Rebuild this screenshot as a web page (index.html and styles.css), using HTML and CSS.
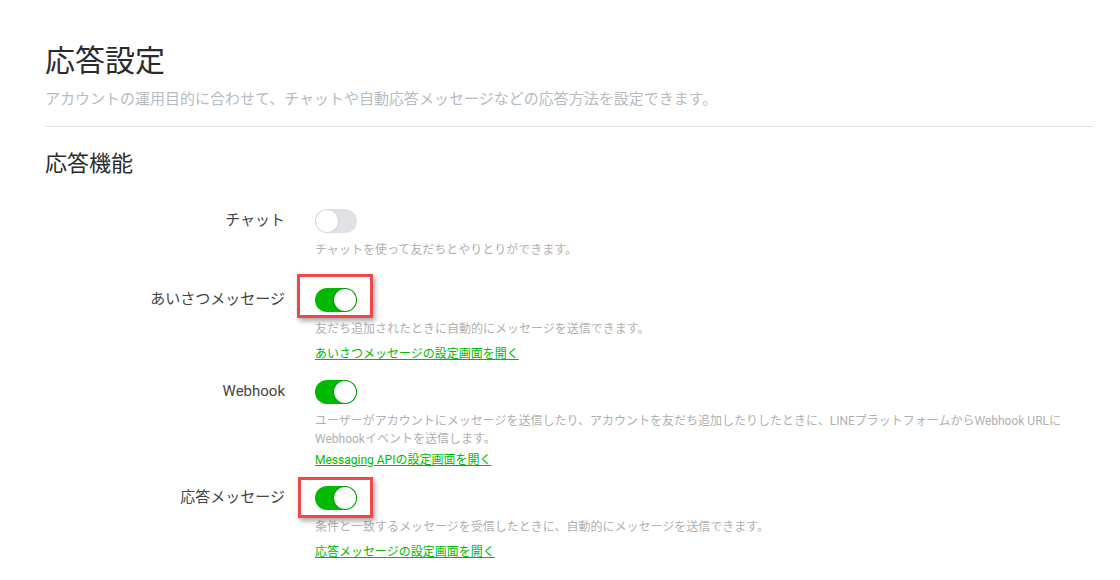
FILE: index.html
```html
<!DOCTYPE html>
<html lang="ja">
<head>
<meta charset="utf-8">
<title>応答設定</title>
<link rel="stylesheet" href="styles.css">
</head>
<body>
<main class="page">
  <h1 class="title">応答設定</h1>
  <p class="lead">アカウントの運用目的に合わせて、チャットや自動応答メッセージなどの応答方法を設定できます。</p>
  <hr class="divider">
  <h2 class="section-title">応答機能</h2>

  <div class="rows">
    <div class="row row-nolink">
      <div class="label">チャット</div>
      <div class="body">
        <span class="toggle"><span class="knob"></span></span>
        <p class="desc">チャットを使って友だちとやりとりができます。</p>
      </div>
    </div>

    <div class="row">
      <div class="label">あいさつメッセージ</div>
      <div class="body">
        <span class="toggle-wrap">
          <span class="toggle on"><span class="knob"></span></span>
          <span class="mark mark-a"></span>
        </span>
        <p class="desc">友だち追加されたときに自動的にメッセージを送信できます。</p>
        <a class="link" href="#">あいさつメッセージの設定画面を開く</a>
      </div>
    </div>

    <div class="row">
      <div class="label">Webhook</div>
      <div class="body">
        <span class="toggle on"><span class="knob"></span></span>
        <p class="desc desc-wide">ユーザーがアカウントにメッセージを送信したり、アカウントを友だち追加したりしたときに、LINEプラットフォームからWebhook URLにWebhookイベントを送信します。</p>
        <a class="link link-tight" href="#">Messaging APIの設定画面を開く</a>
      </div>
    </div>

    <div class="row">
      <div class="label">応答メッセージ</div>
      <div class="body">
        <span class="toggle-wrap">
          <span class="toggle on"><span class="knob"></span></span>
          <span class="mark mark-b"></span>
        </span>
        <p class="desc">条件と一致するメッセージを受信したときに、自動的にメッセージを送信できます。</p>
        <a class="link" href="#">応答メッセージの設定画面を開く</a>
      </div>
    </div>
  </div>
</main>
</body>
</html>
```

FILE: styles.css
```css
* { box-sizing: border-box; }

html, body {
  margin: 0;
  padding: 0;
  background: #ffffff;
}

body {
  font-family: Roboto, "Noto Sans CJK JP", sans-serif;
  color: #333333;
}

.page {
  padding: 41px 27px 0 45px;
}

.title {
  margin: 0;
  font-size: 30px;
  line-height: 40px;
  font-weight: 400;
  color: #2b2b2b;
}

.lead {
  margin: 7px 0 0;
  font-size: 15px;
  line-height: 22px;
  color: #b5bbc3;
}

.divider {
  margin: 16px 0 0;
  border: 0;
  border-top: 1px solid #e3e3e3;
  height: 0;
}

.section-title {
  margin: 21px 0 0;
  font-size: 22px;
  line-height: 32px;
  font-weight: 400;
  color: #2b2b2b;
}

.rows {
  margin-top: 29px;
  display: flex;
  flex-direction: column;
}

.row {
  display: grid;
  grid-template-columns: 240px 1fr;
  column-gap: 30px;
  padding-bottom: 17px;
}

.row-nolink {
  padding-bottom: 29px;
}

.label {
  text-align: right;
  font-size: 15px;
  line-height: 22px;
  color: #444444;
}

.body {
  display: flex;
  flex-direction: column;
  align-items: flex-start;
}

.toggle-wrap {
  position: relative;
  display: block;
}

.toggle {
  position: relative;
  display: block;
  width: 42px;
  height: 24px;
  border-radius: 12px;
  background: #dfe1e5;
}

.toggle.on {
  background: #00b900;
}

.knob {
  position: absolute;
  top: 1px;
  left: 1px;
  width: 22px;
  height: 22px;
  border-radius: 50%;
  background: #ffffff;
  box-shadow: 0 0 0 1px rgba(0, 0, 0, 0.06);
}

.toggle.on .knob {
  left: 19px;
  box-shadow: 0 0 0 1px rgba(0, 100, 0, 0.35);
}

.mark {
  position: absolute;
  border: 3px solid #f2474a;
  box-shadow: 2px 3px 5px rgba(0, 0, 0, 0.35);
  pointer-events: none;
}

.mark-a {
  left: -18px;
  top: -14px;
  width: 76px;
  height: 44px;
}

.mark-b {
  left: -17px;
  top: -9px;
  width: 75px;
  height: 41px;
}

.desc {
  margin: 8px 0 0;
  font-size: 12px;
  line-height: 18px;
  color: #b0b0b0;
}

.link {
  margin-top: 7px;
  font-size: 12px;
  line-height: 18px;
  color: #00b900;
  text-decoration: underline;
}

.link-tight {
  margin-top: 3px;
}
```
